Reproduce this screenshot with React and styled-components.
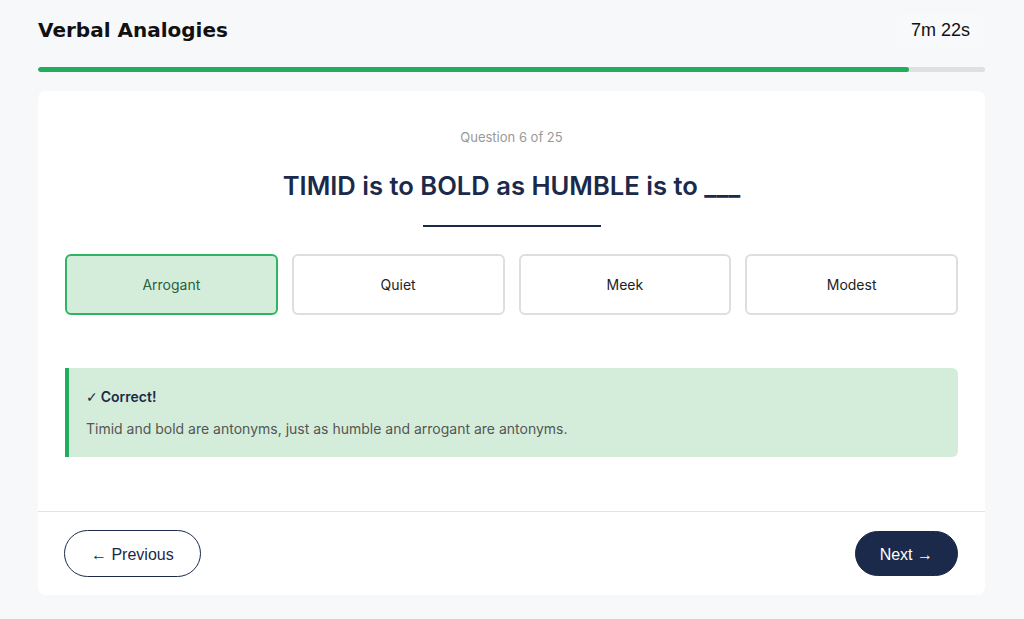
import React from 'react'
import styled, { createGlobalStyle } from 'styled-components'

const GlobalStyle = createGlobalStyle`
  html, body {
    margin: 0;
    padding: 0;
    background: #f7f8fa;
    font-family: Inter, "Liberation Sans", sans-serif;
  }
  * { box-sizing: border-box; }
`

const Page = styled.div`
  width: 1024px;
  min-height: 619px;
  padding: 12px 39px 24px 38px;
`

const Header = styled.header`
  display: flex;
  justify-content: space-between;
  align-items: center;
  height: 36px;
`

const Title = styled.h1`
  margin: 0;
  font-family: "DejaVu Sans", sans-serif;
  font-size: 20px;
  font-weight: 700;
  color: #111;
`

const Timer = styled.div`
  font-family: "Liberation Sans", Arial, sans-serif;
  font-size: 18px;
  color: #111;
  padding: 6px 15px;
  border-radius: 8px;
  background: #f8f9fb;
`

const Track = styled.div`
  margin-top: 19px;
  height: 5px;
  border-radius: 3px;
  background: #e0e0e0;
  overflow: hidden;
`

const Fill = styled.div`
  height: 100%;
  background: #22ad5c;
  border-radius: 3px;
`

const Card = styled.main`
  margin-top: 19px;
  background: #fff;
  border-radius: 8px;
  overflow: hidden;
`

const Body = styled.section`
  padding: 38px 27px 54px 27px;
  display: flex;
  flex-direction: column;
  align-items: center;
`

const Counter = styled.div`
  font-size: 13px;
  line-height: 16px;
  color: #999;
`

const Question = styled.h2`
  margin: 25px 0 0 0;
  font-size: 25.6px;
  line-height: 32px;
  font-weight: 600;
  color: #1b2a4a;
`

const Rule = styled.div`
  margin-top: 23px;
  width: 178px;
  height: 2px;
  background: #1b2a4a;
`

const Options = styled.div`
  margin-top: 27px;
  width: 100%;
  display: grid;
  grid-template-columns: repeat(4, 1fr);
  gap: 14px;
`

const Option = styled.button`
  height: 61px;
  border-radius: 6px;
  font-family: Inter, sans-serif;
  font-size: 14px;
  cursor: pointer;
  border: 2px solid ${p => (p.$selected ? '#2fb463' : '#dedede')};
  background: ${p => (p.$selected ? '#d4edda' : '#fff')};
  color: ${p => (p.$selected ? '#2b5e3a' : '#222')};
`

const Feedback = styled.div`
  margin-top: 53px;
  width: 100%;
  background: #d4edda;
  border-left: 4px solid #22ad5c;
  border-radius: 0 6px 6px 0;
  padding: 19px 18px 18px 17px;
`

const FeedbackTitle = styled.div`
  font-size: 14px;
  line-height: 20px;
  font-weight: 600;
  color: #1b2a4a;
`

const Check = styled.span`
  font-family: "DejaVu Sans", sans-serif;
  font-weight: 700;
  margin-right: 3px;
`

const FeedbackText = styled.p`
  margin: 12px 0 0 0;
  font-size: 14px;
  line-height: 20px;
  color: #555;
`

const Footer = styled.footer`
  border-top: 1px solid #e3e3e3;
  padding: 18px 27px 18px 26px;
  display: flex;
  justify-content: space-between;
  align-items: center;
`

const NavButton = styled.button`
  height: ${p => (p.$primary ? '45px' : '47px')};
  padding: 0 ${p => (p.$primary ? '24px' : '26px')};
  border-radius: 24px;
  font-family: "Liberation Sans", Arial, sans-serif;
  font-size: 16px;
  cursor: pointer;
  border: 1.5px solid #1b2a4a;
  background: ${p => (p.$primary ? '#1b2a4a' : '#fff')};
  color: ${p => (p.$primary ? '#fff' : '#1b2a4a')};
`

const Arrow = styled.span`
  font-family: "Noto Sans", sans-serif;
  font-weight: 300;
`

const options = ['Arrogant', 'Quiet', 'Meek', 'Modest']

export default function App() {
  return (
    <>
      <GlobalStyle />
      <Page>
        <Header>
          <Title>Verbal Analogies</Title>
          <Timer>7m 22s</Timer>
        </Header>
        <Track>
          <Fill style={{ width: '92%' }} />
        </Track>
        <Card>
          <Body>
            <Counter>Question 6 of 25</Counter>
            <Question>TIMID is to BOLD as HUMBLE is to ___</Question>
            <Rule />
            <Options>
              {options.map((o, i) => (
                <Option key={o} $selected={i === 0}>{o}</Option>
              ))}
            </Options>
            <Feedback>
              <FeedbackTitle><Check>✓</Check>Correct!</FeedbackTitle>
              <FeedbackText>
                Timid and bold are antonyms, just as humble and arrogant are antonyms.
              </FeedbackText>
            </Feedback>
          </Body>
          <Footer>
            <NavButton><Arrow>←</Arrow> Previous</NavButton>
            <NavButton $primary>Next <Arrow>→</Arrow></NavButton>
          </Footer>
        </Card>
      </Page>
    </>
  )
}
